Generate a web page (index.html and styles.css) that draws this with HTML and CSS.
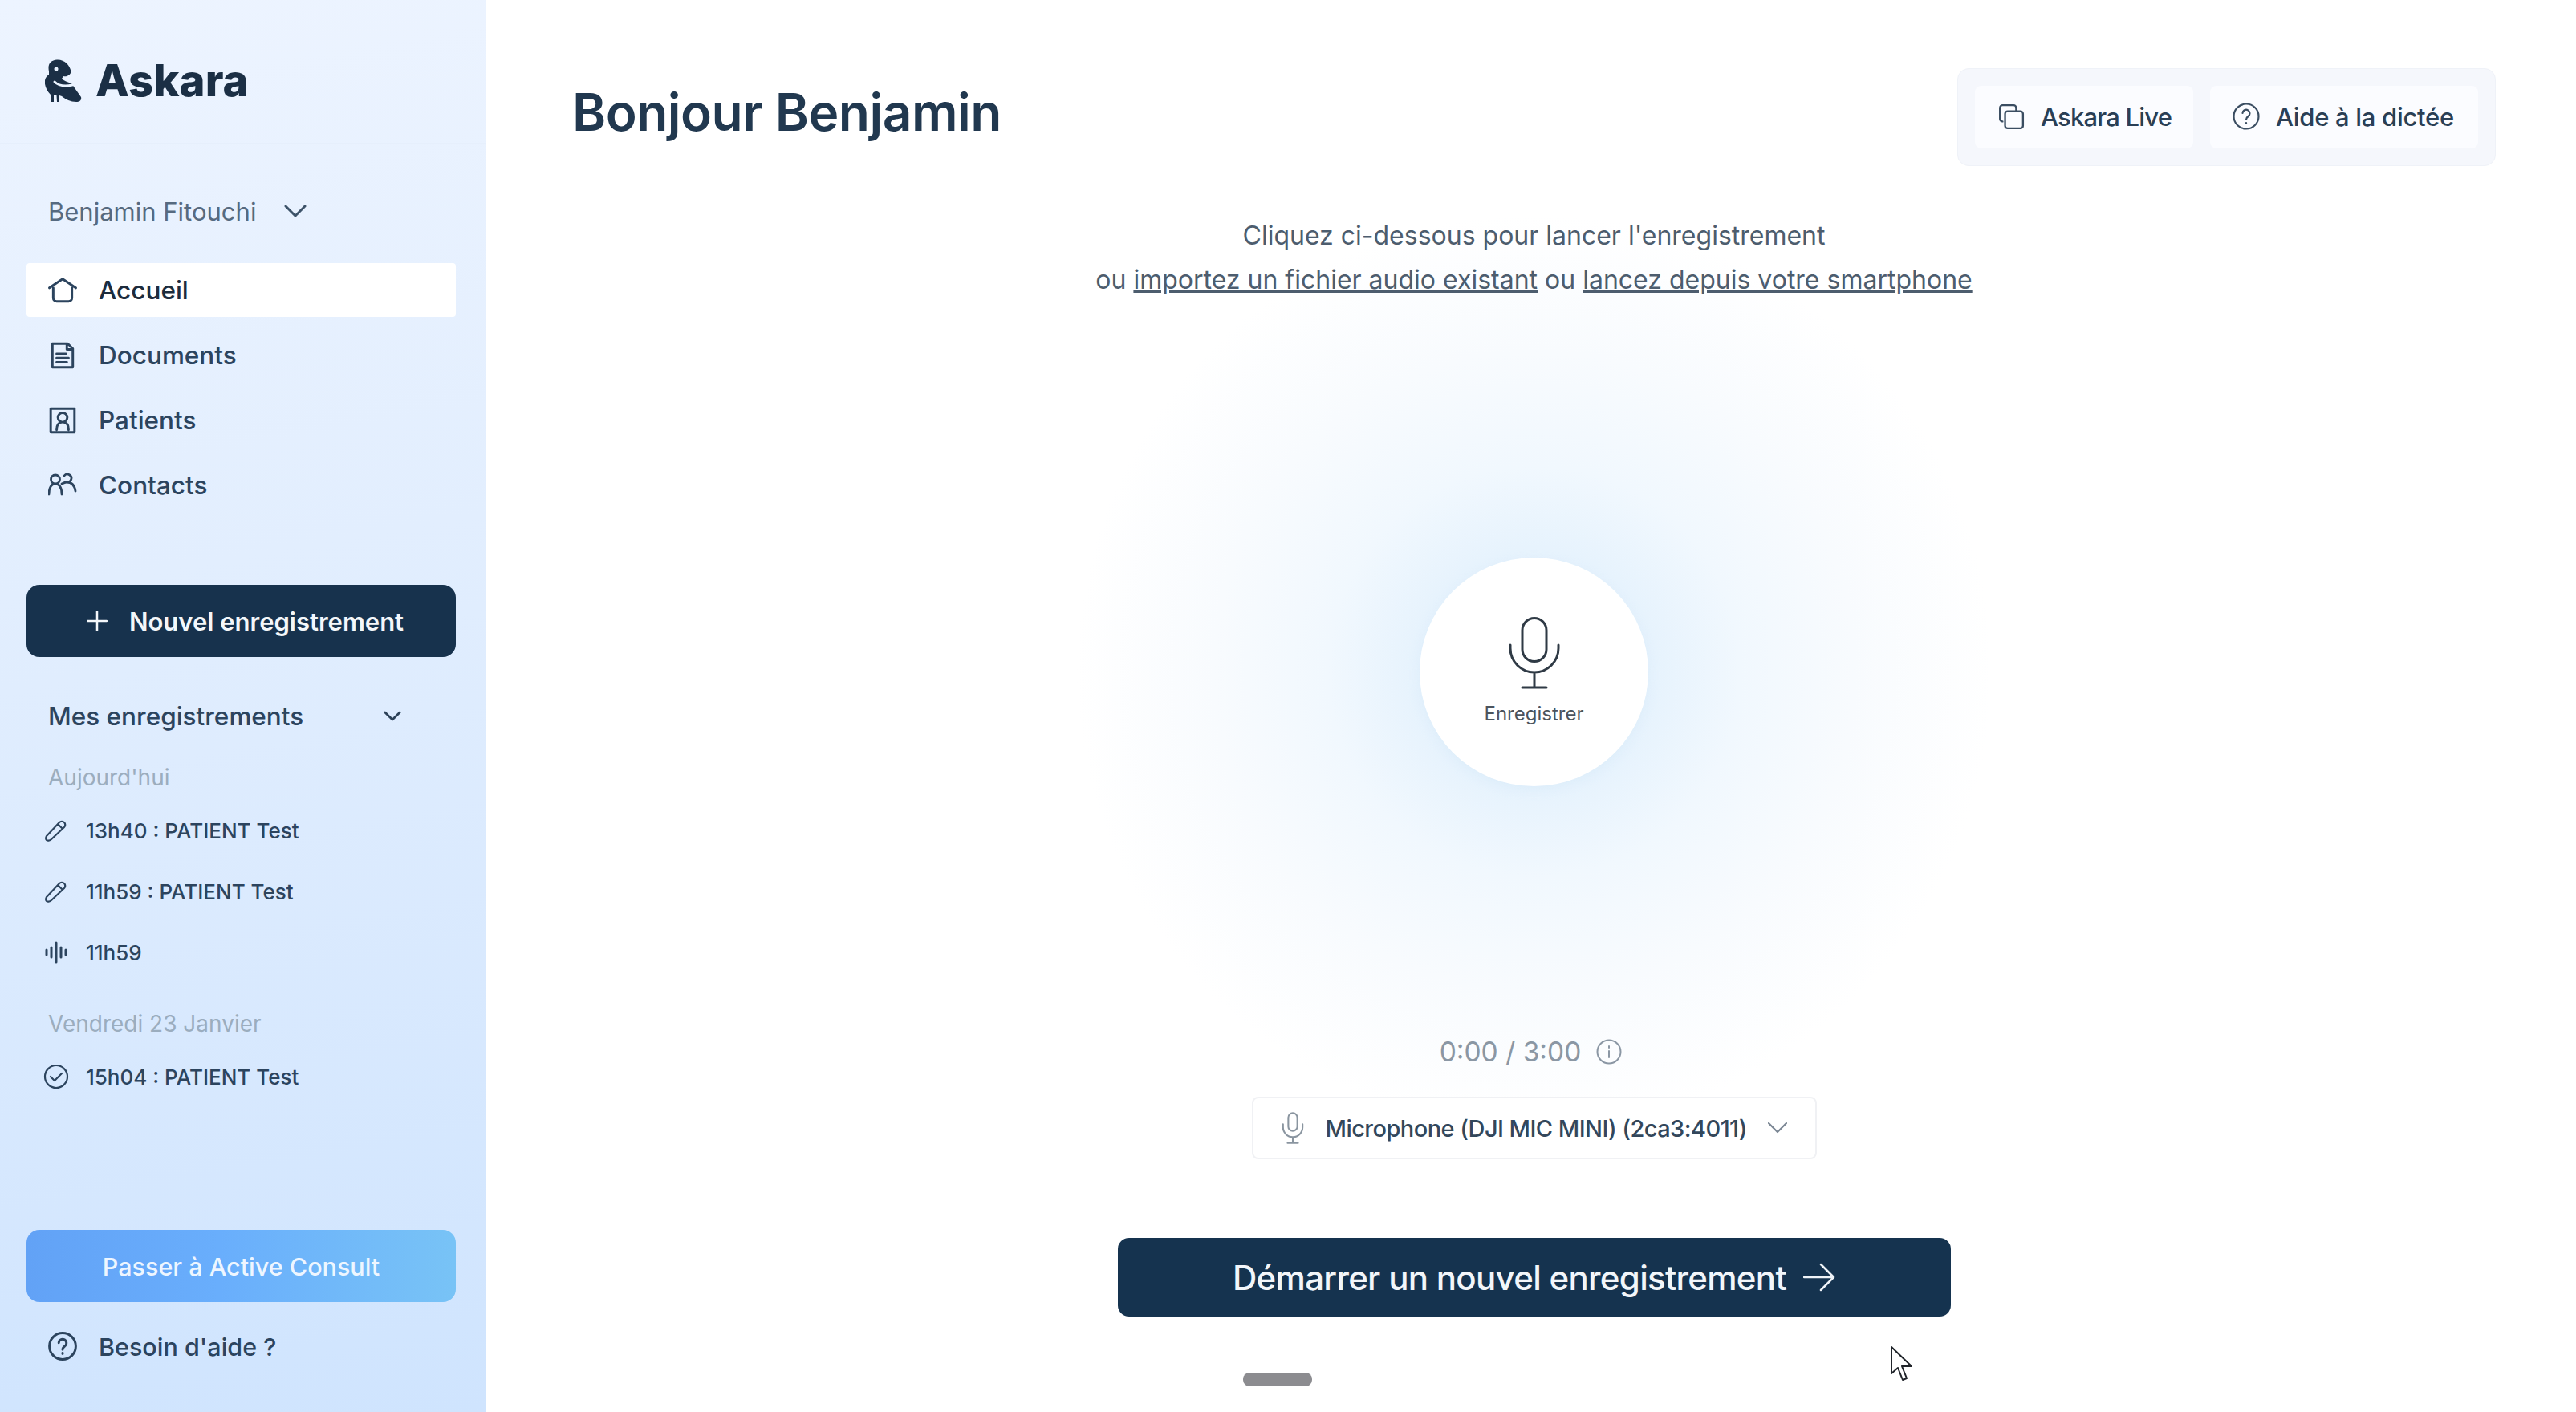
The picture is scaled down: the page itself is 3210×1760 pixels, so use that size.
FILE: index.html
```html
<!DOCTYPE html>
<html lang="fr">
<head>
  <meta charset="UTF-8">
  <title>Askara</title>
  <link rel="stylesheet" href="styles.css">
</head>
<body>
<aside class="sidebar">
  <div class="logo-row">
    <svg class="logo-mark" viewBox="12 9 46 53" width="46" height="53">
      <path fill="#1b2f45" d="M17 24C15 15 19 10 27 9.500C36 9 43 16 44.500 24C44 29 39 31 35 30L33 33C36 36 40 37 45 39L57 56C58 60 55 62 51 62C44 62 38 59 33 55L30 54V62H27L26.500 54H23V62H20L19 53C14 48 11 41 12 35C13 31 15 29 17 28Z"/>
      <circle cx="26" cy="21" r="2.500" fill="#eaf3fe"/>
      <path class="logo-band" d="M24 37C29 42 37 43 46 41"/>
    </svg>
    <span class="logo-text">Askara</span>
  </div>

  <div class="user-row">
    <span>Benjamin Fitouchi</span>
    <svg class="chev" viewBox="0 0 28 16" width="28" height="16"><path d="M2 2l12 12L26 2"/></svg>
  </div>

  <nav class="nav">
    <a class="nav-item active">
      <svg class="ico" viewBox="0 0 34 34"><path d="M1.500 14L17 3.500 32.500 14M6 14v12a4 4 0 0 0 4 4h14a4 4 0 0 0 4-4V14"/></svg>
      Accueil
    </a>
    <a class="nav-item">
      <svg class="ico" viewBox="0 0 34 34"><path d="M5 3h18l6 6v22H5zM22 3v7h7M10 15h11M10 20h14M10 25h12"/></svg>
      Documents
    </a>
    <a class="nav-item">
      <svg class="ico" viewBox="0 0 34 34"><path d="M3 3h28v28H3zM10 28c0-5 2-9 7-9s7 4 7 9M17 19a5.500 5.500 0 1 0 0-11 5.500 5.500 0 0 0 0 11z"/></svg>
      Patients
    </a>
    <a class="nav-item">
      <svg class="ico" viewBox="0 0 36 34"><path d="M1 28c0-8 3-13 8-13s8 5 8 13M9 15a5.500 5.500 0 1 0 0-11 5.500 5.500 0 0 0 0 11zM23 13a5 5 0 1 0-3-8M23 13c6 0 10 4 11 11M17 15c2-1 4-2 6-2"/></svg>
      Contacts
    </a>
  </nav>

  <button class="new-btn">
    <svg class="plus" viewBox="0 0 26 26" width="26" height="26"><path d="M13 1v24M1 13h24"/></svg>
    Nouvel enregistrement
  </button>

  <div class="rec-head">
    <span>Mes enregistrements</span>
    <svg class="chev small" viewBox="0 0 24 14" width="22" height="13"><path d="M2 2l10 10L22 2"/></svg>
  </div>

  <div class="rec-date first">Aujourd'hui</div>
  <a class="rec-item">
    <svg class="rec-ico" viewBox="0 0 28 28"><path d="M2 21L18 4a4 4 0 0 1 6 6L8 25c-2 2-5 2-6 1s-1-3 0-5zM16 6l6 6"/></svg>
    13h40 : PATIENT Test
  </a>
  <a class="rec-item">
    <svg class="rec-ico" viewBox="0 0 28 28"><path d="M2 21L18 4a4 4 0 0 1 6 6L8 25c-2 2-5 2-6 1s-1-3 0-5zM16 6l6 6"/></svg>
    11h59 : PATIENT Test
  </a>
  <a class="rec-item">
    <svg class="rec-ico" viewBox="0 0 28 28"><path class="thick" d="M2 11v6M8 8v12M14 2v24M20 8v12M26 11v6"/></svg>
    11h59
  </a>
  <div class="rec-date">Vendredi 23 Janvier</div>
  <a class="rec-item">
    <svg class="rec-ico wide" viewBox="0 0 32 32"><circle cx="16" cy="16" r="14"/><path d="M9 16l5 5 9-9"/></svg>
    15h04 : PATIENT Test
  </a>

  <button class="switch-btn">Passer à Active Consult</button>

  <a class="help-row">
    <svg class="ico" viewBox="0 0 34 34"><circle cx="17" cy="17" r="15.500"/><path d="M12.500 13a4.500 4.500 0 1 1 7 4c-1.500 1-2.500 2-2.500 4M17 25v1"/></svg>
    Besoin d'aide ?
  </a>
</aside>

<main class="main">
  <header class="top">
    <h1>Bonjour Benjamin</h1>
    <div class="top-actions">
      <button class="top-btn live">
        <svg class="top-ico" viewBox="0 0 32 32"><path d="M6 22a3 3 0 0 1-3-3V6a3 3 0 0 1 3-3h13a3 3 0 0 1 3 3v3"/><rect x="9" y="10" width="21" height="20" rx="3"/></svg>
        Askara Live
      </button>
      <button class="top-btn dictee">
        <svg class="top-ico" viewBox="0 0 34 34"><circle cx="17" cy="17" r="15.500"/><path d="M12.500 13a4.500 4.500 0 1 1 7 4c-1.500 1-2.500 2-2.500 4M17 25v1"/></svg>
        Aide à la dictée
      </button>
    </div>
  </header>

  <p class="intro">
    Cliquez ci-dessous pour lancer l'enregistrement<br>
    ou <a>importez un fichier audio existant</a> ou <a>lancez depuis votre smartphone</a>
  </p>

  <button class="record">
    <svg class="record-mic" viewBox="0 0 64 90" width="64" height="90">
      <rect x="17" y="1.500" width="30" height="54" rx="15"/>
      <path d="M2 35v4a30 30 0 0 0 60 0v-4M32 69v19M17 88h30"/>
    </svg>
    <span>Enregistrer</span>
  </button>

  <div class="timer">
    0:00 / 3:00
    <svg class="info" viewBox="0 0 32 32" width="32" height="32"><circle cx="16" cy="16" r="14.500"/><path d="M16 15v8M16 9v2"/></svg>
  </div>

  <div class="mic-select">
    <svg class="select-mic" viewBox="0 0 32 42" width="30" height="40">
      <rect x="10" y="1" width="12" height="24" rx="6"/>
      <path d="M3 16v4a13 13 0 0 0 26 0v-4M16 33v8M9 41h14"/>
    </svg>
    <span>Microphone (DJI MIC MINI) (2ca3:4011)</span>
    <svg class="select-chev" viewBox="0 0 24 14" width="24" height="14"><path d="M1 1l11 11L23 1"/></svg>
  </div>

  <button class="start-btn">
    Démarrer un nouvel enregistrement
    <svg class="arrow" viewBox="0 0 40 36" width="40" height="36"><path d="M1 18h37M22 2l16 16-16 16"/></svg>
  </button>
</main>

<!-- bits of the screen recording, they float above the page -->
<div class="scrub"></div>
<svg class="cursor" viewBox="0 0 28 44" width="28" height="44"><path d="M1 1v33l8-7 6 15 5-2-6-15h12z"/></svg>
</body>
</html>
```

FILE: styles.css
```css
* {
  box-sizing: border-box;
}

html,
body {
  height: 100%;
}

body {
  display: flex;
  margin: 0;
  height: 1760px;
  overflow: hidden;
  font-family: Inter, "Liberation Sans", sans-serif;
  background: #ffffff;
  color: #1f3349;
}

button {
  font-family: inherit;
  border: none;
}

svg {
  flex: none;
  fill: none;
  stroke-linecap: round;
  stroke-linejoin: round;
}

/* sidebar */

.sidebar {
  width: 606px;
  flex: none;
  padding: 0 37px 0 33px;
  background: linear-gradient(170deg, #edf4ff 0%, #e2eefe 40%, #cfe4fe 100%);
  border-right: 1px solid #e6e8f4;
}

.logo-row {
  display: flex;
  align-items: center;
  gap: 17px;
  height: 180px;
  margin: 0 -37px 0 -33px;
  padding: 22px 0 0 56px;
  border-bottom: 2px solid #e6effc;
}

.logo-text {
  font-size: 54.5px;
  font-weight: 800;
  color: #1b2f45;
}

.logo-band {
  stroke: #eaf3fe;
  stroke-width: 3;
}

.user-row {
  display: flex;
  align-items: center;
  gap: 35px;
  margin-top: 52px;
  padding-left: 27px;
  height: 62px;
  font-size: 31px;
  color: #566a80;
}

.chev path {
  stroke: #3d5369;
  stroke-width: 3;
}

.chev.small path {
  stroke: #2d4258;
}

.nav {
  display: flex;
  flex-direction: column;
  gap: 14px;
  margin-top: 34px;
}

.nav-item {
  display: flex;
  align-items: center;
  gap: 27px;
  height: 67px;
  padding-left: 27px;
  font-size: 31.5px;
  font-weight: 500;
  color: #2c445e;
  border-radius: 4px;
}

.nav-item.active {
  background: #ffffff;
  color: #1c2c3d;
}

.ico {
  width: 36px;
  height: 36px;
  stroke: #2c445e;
  stroke-width: 2.8;
}

.new-btn {
  display: flex;
  align-items: center;
  justify-content: center;
  gap: 27px;
  width: 100%;
  height: 90px;
  margin-top: 91px;
  padding-left: 16px;
  border-radius: 16px;
  background: #17324d;
  color: #f4f7fa;
  font-size: 31px;
  font-weight: 600;
}

.plus path {
  stroke: #f4f7fa;
  stroke-width: 2.5;
}

.rec-head {
  display: flex;
  align-items: center;
  justify-content: space-between;
  height: 50px;
  margin-top: 48px;
  padding: 0 68px 0 27px;
  font-size: 31.5px;
  font-weight: 500;
  color: #2c445e;
}

.rec-date {
  height: 44px;
  margin-top: 45px;
  padding-left: 27px;
  font-size: 28px;
  line-height: 44px;
  color: #9badbe;
}

.rec-date.first {
  margin-top: 30px;
}

.rec-item {
  display: flex;
  align-items: center;
  gap: 23px;
  height: 44px;
  margin-top: 32px;
  padding-left: 23px;
  font-size: 26px;
  font-weight: 500;
  color: #2c445e;
}

.rec-date + .rec-item {
  margin-top: 22px;
}

.rec-ico {
  width: 28px;
  height: 28px;
  stroke: #2c445e;
  stroke-width: 2.2;
}

.rec-ico.wide {
  width: 32px;
  height: 32px;
  margin: 0 -2px 0 -2px;
}

.rec-ico .thick {
  stroke-width: 3;
}

.switch-btn {
  display: block;
  width: 100%;
  height: 90px;
  margin-top: 169px;
  border-radius: 16px;
  background: linear-gradient(90deg, #62a2f6 0%, #69aefc 45%, #78c3f6 100%);
  color: #eef6ff;
  font-size: 30.5px;
  font-weight: 500;
}

.help-row {
  display: flex;
  align-items: center;
  gap: 27px;
  height: 50px;
  margin-top: 30px;
  padding-left: 27px;
  font-size: 30.5px;
  font-weight: 500;
  color: #2c445e;
}

/* main part */

.main {
  flex: 1;
  display: flex;
  flex-direction: column;
  align-items: center;
  padding: 85px 100px 0 107px;
  background:
    radial-gradient(circle 570px at 1306px 837px, #e0effc 0%, #e7f3fd 27%, #f1f8fe 45%, #f8fbfe 70%, #ffffff 100%);
}

.top {
  display: flex;
  align-items: center;
  justify-content: space-between;
  width: 100%;
  height: 122px;
}

h1 {
  margin: -14px 0 0;
  font-size: 64px;
  font-weight: 600;
  letter-spacing: -0.5px;
  color: #21384f;
}

.top-actions {
  display: flex;
  gap: 21px;
  height: 122px;
  padding: 21px 21px;
  background: #f5f7fc;
  border: 1px solid #eff2f8;
  border-radius: 14px;
}

.top-btn {
  display: flex;
  align-items: center;
  gap: 20px;
  padding: 0 0 2px 28px;
  background: #fbfcff;
  border-radius: 8px;
  font-size: 31px;
  font-weight: 500;
  letter-spacing: -0.3px;
  color: #2a3f55;
}

.top-btn.live {
  width: 272px;
  letter-spacing: -0.8px;
}

.top-btn.dictee {
  width: 334px;
}

.top-ico {
  width: 34px;
  height: 34px;
  stroke: #3a4d61;
  stroke-width: 2.2;
}

.intro {
  margin: 59px 0 0;
  font-size: 32px;
  line-height: 55px;
  text-align: center;
  color: #4d5d6e;
}

.intro a {
  text-decoration: underline;
}

.record {
  display: flex;
  flex-direction: column;
  align-items: center;
  width: 285px;
  height: 285px;
  margin-top: 319px;
  padding-top: 74px;
  border-radius: 50%;
  background: #ffffff;
  box-shadow: 0 4px 14px rgba(200, 225, 245, 0.3);
  font-size: 24px;
  color: #4c545d;
}

.record span {
  margin-top: 16px;
}

.record-mic rect,
.record-mic path {
  stroke: #2f3a45;
  stroke-width: 3;
}

.timer {
  display: flex;
  align-items: center;
  gap: 19px;
  height: 50px;
  margin-top: 306px;
  padding-right: 8px;
  font-size: 33.5px;
  color: #8b97a4;
}

.info circle,
.info path {
  stroke: #8b97a4;
  stroke-width: 2;
}

.mic-select {
  display: flex;
  align-items: center;
  gap: 26px;
  width: 704px;
  height: 78px;
  margin-top: 31px;
  padding: 0 36px 0 34px;
  background: #ffffff;
  border: 2px solid #f0f1f4;
  border-radius: 8px;
  font-size: 29px;
  font-weight: 500;
  letter-spacing: -0.55px;
  color: #33475b;
  white-space: nowrap;
}

.select-mic rect,
.select-mic path {
  stroke: #8a95a0;
  stroke-width: 2.2;
}

.select-chev {
  margin-left: auto;
}

.select-chev path {
  stroke: #7b8794;
  stroke-width: 2.2;
}

.start-btn {
  display: flex;
  align-items: center;
  justify-content: center;
  gap: 21px;
  flex: none;
  width: 1038px;
  height: 98px;
  margin-top: 98px;
  border-radius: 14px;
  background: #15334f;
  color: #f2f6fa;
  font-size: 42px;
  font-weight: 500;
  letter-spacing: -0.7px;
}

.arrow path {
  stroke: #eef3f8;
  stroke-width: 2.5;
}

/* recording overlay */

.scrub {
  position: absolute;
  left: 1549px;
  top: 1711px;
  width: 86px;
  height: 17px;
  border-radius: 8px;
  background: #8c8c90;
}

.cursor {
  position: absolute;
  left: 2356px;
  top: 1678px;
}

.cursor path {
  fill: #ffffff;
  stroke: #20242a;
  stroke-width: 2;
}
```
